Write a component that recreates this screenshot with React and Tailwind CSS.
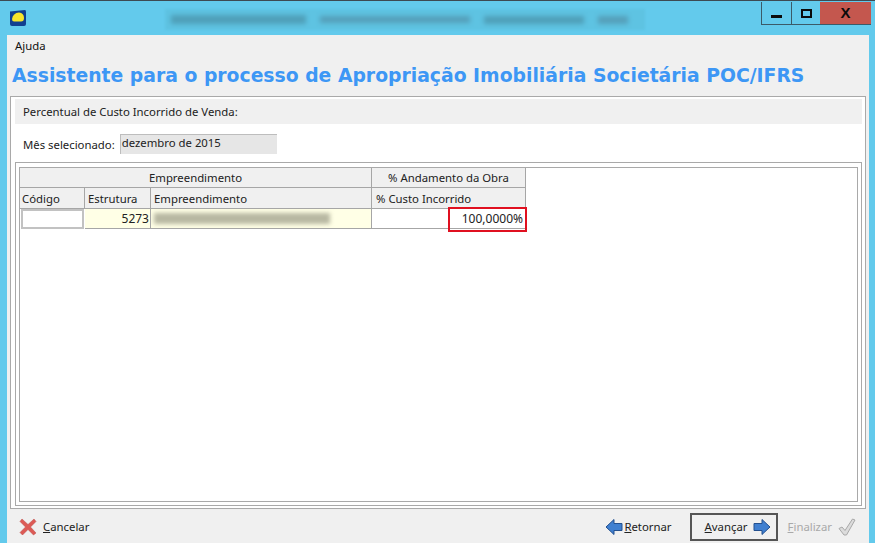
const body = { fontFamily: '"Noto Sans", "Liberation Sans", sans-serif' }

function AppIcon() {
  return (
    <svg width="18" height="18" viewBox="0 0 18 18">
      <path d="M1 2.5 L16 1 Q17 1 17 3 L17 15 Q17 17 15 17 L3 17 Q1 17 1 15 Z" fill="#113f8f" />
      <path d="M3 10 Q4 4 10 3.5 Q15 4 15 9 Q15 12.5 12 12.5 L5 12.5 Q3 12.5 3 10 Z" fill="#f7e52b" />
    </svg>
  )
}

function CancelIcon() {
  return (
    <svg width="18" height="18" viewBox="0 0 18 18">
      <path d="M3 1 L9 6.5 L15 1 L17 3.5 L11.5 9 L17 15 L14.5 17 L9 11.5 L3.5 17 L1 14.5 L6.5 9 L1 3.5 Z" fill="#dd5a55" stroke="#b94a48" strokeWidth="0.5" />
    </svg>
  )
}

function BlueArrow({ left }) {
  return (
    <svg width="18" height="18" viewBox="0 0 18 18" className={left ? '' : 'rotate-180'}>
      <path d="M1 9 L9 1.5 L9 5.5 L17 5.5 L17 12.5 L9 12.5 L9 16.5 Z" fill="#3f7fd0" stroke="#23508f" strokeWidth="1" />
    </svg>
  )
}

function CheckIcon() {
  return (
    <svg width="18" height="18" viewBox="0 0 18 18">
      <path d="M1 10.5 L4 9 L7 12.5 L14.5 1 L17 2 L8.5 17 L6 17 Z" fill="#dcdcdc" stroke="#a8a8a8" strokeWidth="1" />
    </svg>
  )
}

function Cell({ className = '', children }) {
  return <div className={`flex items-center border-r border-b border-[#a6a6a6] whitespace-nowrap overflow-hidden ${className}`}>{children}</div>
}

export default function App() {
  return (
    <div className="w-[875px] h-[543px] overflow-hidden flex flex-col bg-[#63caec] border-t border-[#3d4a52] text-[11.35px] text-[#222]" style={body}>
      <div className="h-[34px] shrink-0 flex items-start">
        <div className="ml-[9px] mt-[8px]"><AppIcon /></div>
        <div className="ml-[138px] mt-[8px] w-[480px] h-[21px] flex items-center gap-[14px] bg-[#5ec3e2] blur-[1px]">
          <div className="ml-[6px] w-[135px] h-[9px] bg-[#4f9fb8] blur-[2px]"></div>
          <div className="w-[150px] h-[7px] bg-[#559fb9] blur-[2px]"></div>
          <div className="w-[100px] h-[8px] bg-[#4f9fb8] blur-[2px]"></div>
          <div className="w-[30px] h-[8px] bg-[#559fb9] blur-[2px]"></div>
        </div>
        <div className="ml-[116px] mt-[1px] h-[23px] flex border-l border-b border-[#3b5a68]">
          <div className="w-[30px] flex items-center justify-center border-r border-[#3b5a68]">
            <div className="w-[11px] h-[3px] mt-[6px] bg-[#0b0b0b]"></div>
          </div>
          <div className="w-[28px] flex items-center justify-center">
            <div className="w-[11px] h-[9px] border-2 border-[#0b0b0b]"></div>
          </div>
          <div className="w-[51px] flex items-center justify-center bg-[#c4574e] text-[#0b0b0b] text-[15px] font-bold" style={{ fontFamily: '"Liberation Sans", sans-serif' }}>X</div>
        </div>
      </div>

      <div className="mx-[7px] flex-1 min-h-0 flex flex-col bg-[#f0f0f0] w-[862px]">
        <div className="h-[21px] pl-[8px] pt-[2px] shrink-0 text-[#111]">Ajuda</div>
        <div className="h-[40px] pl-[5px] shrink-0 flex items-center text-[18.8px] font-bold text-[#3d97f5] whitespace-nowrap" style={{ fontFamily: '"DejaVu Sans", sans-serif' }}>
          Assistente para o processo de Apropriação Imobiliária Societária POC/IFRS
        </div>

        <div className="ml-[3px] w-[856px] h-[413px] shrink-0 bg-white border border-[#a9a9a9] flex flex-col pl-[4px] pr-[3px]">
          <div className="h-[25px] mt-[2px] shrink-0 bg-[#f0f0f0] flex items-center pl-[8px] text-[#222]">Percentual de Custo Incorrido de Venda:</div>
          <div className="h-[38px] shrink-0 flex items-center pl-[8px]">
            <span className="mt-[4px]">Mês selecionado:</span>
            <div className="ml-[5px] mt-[1px] w-[157px] h-[20px] bg-[#e6e6e6] border-t border-l border-[#bdbdbd] pl-[1px] leading-[15px]">dezembro de 2015</div>
          </div>
          <div className="flex-1 min-h-0 border border-[#a9a9a9] mb-[2px] pt-[4px] px-[3px] pb-[3px] bg-white">
            <div className="h-full border border-[#a9a9a9] bg-white">
              <div className="grid grid-cols-[65px_66px_221px_154px] grid-rows-[20px_21px_20px] w-[506px]">
                <Cell className="col-span-3 justify-center bg-[#f0f0f0]">Empreendimento</Cell>
                <Cell className="justify-center bg-[#f0f0f0]">% Andamento da Obra</Cell>
                <Cell className="bg-[#f0f0f0] pl-[2px] pt-[2px]">Código</Cell>
                <Cell className="bg-[#f0f0f0] pl-[3px] pt-[2px]">Estrutura</Cell>
                <Cell className="bg-[#f0f0f0] pl-[3px] pt-[2px]">Empreendimento</Cell>
                <Cell className="bg-[#f0f0f0] pl-[4px] pt-[2px]">% Custo Incorrido</Cell>
                <div className="bg-white border-2 border-[#c2c2c2] mr-[1px] ml-[1px]"></div>
                <Cell className="justify-end bg-[#ffffe6] pr-[1px] pt-[1px] text-[12px]">5273</Cell>
                <Cell className="bg-[#ffffe6] pl-[3px]">
                  <div className="w-[176px] h-[11px] bg-[#b8b8a2] blur-[2px]"></div>
                </Cell>
                <div className="relative flex items-center justify-end pr-[2px] pt-[1px] text-[12px] border-r border-b border-[#a6a6a6]">
                  100,0000%
                  <div className="absolute -top-[2px] -right-[2px] w-[79px] h-[25px] border-2 border-[#e01020]"></div>
                </div>
              </div>
            </div>
          </div>
        </div>

        <div className="flex-1 min-h-0 flex items-center">
          <div className="ml-[12px] mt-[2px] flex items-center gap-[6px]">
            <CancelIcon />
            <span><u>C</u>ancelar</span>
          </div>
          <div className="ml-auto mt-[2px] flex items-center">
            <BlueArrow left />
            <span className="ml-[1px]"><u>R</u>etornar</span>
            <div className="ml-[18px] w-[88px] h-[28px] border-2 border-[#555] pl-[8px] flex items-center justify-center gap-[5px]">
              <span><u>A</u>vançar</span>
              <BlueArrow />
            </div>
            <span className="ml-[10px] text-[#a9a9a9]"><u>F</u>inalizar</span>
            <div className="ml-[6px] mr-[13px]"><CheckIcon /></div>
          </div>
        </div>
      </div>
    </div>
  )
}
